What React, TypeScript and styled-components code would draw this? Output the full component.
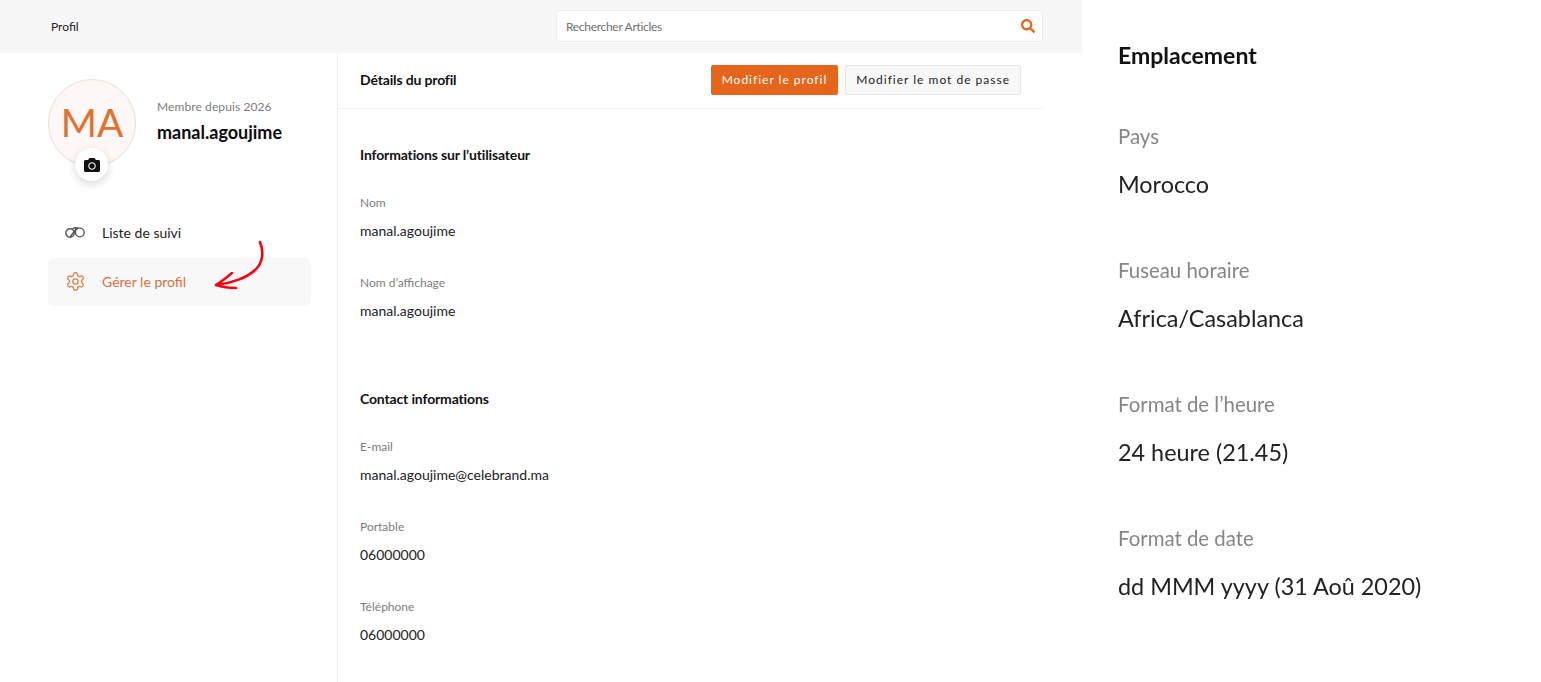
import React from "react";
import styled, { createGlobalStyle } from "styled-components";
import { FaCamera, FaSearch } from "react-icons/fa";
import { LuSettings } from "react-icons/lu";

const GlobalStyle = createGlobalStyle`
  html, body {
    margin: 0;
    padding: 0;
    height: 682px;
    overflow: hidden;
    background: #fff;
    font-family: Lato, "Open Sans", sans-serif;
  }
`;

const sections = [
  {
    title: "Informations sur l’utilisateur",
    fields: [
      { label: "Nom", value: "manal.agoujime" },
      { label: "Nom d’affichage", value: "manal.agoujime" },
    ],
  },
  {
    title: "Contact informations",
    fields: [
      { label: "E-mail", value: "manal.agoujime@celebrand.ma" },
      { label: "Portable", value: "06000000" },
      { label: "Téléphone", value: "06000000" },
    ],
  },
];

const locationFields = [
  { label: "Pays", value: "Morocco" },
  { label: "Fuseau horaire", value: "Africa/Casablanca" },
  { label: "Format de l’heure", value: "24 heure (21.45)" },
  { label: "Format de date", value: "dd MMM yyyy (31 Aoû 2020)" },
];

function Binoculars() {
  return (
    <svg width="20" height="12" viewBox="0 0 20 12" fill="none" stroke="#555" strokeWidth="1.4" strokeLinecap="round">
      <circle cx="5" cy="7" r="4.2" />
      <circle cx="14.8" cy="6.5" r="4.4" />
      <path d="M5.5 10.5 L11.5 2.5 M8 2.6 C9.5 1.6 11.5 1.6 13 2.2" />
    </svg>
  );
}

function HandArrow() {
  return (
    <svg width="54" height="54" viewBox="0 0 54 54" fill="none" stroke="#f5000c" strokeLinecap="round" strokeLinejoin="round">
      <path d="M47 2 C51 12 50 23 42 30 C35 37 20 43 3 45" strokeWidth="2.6" />
      <path d="M19 33 C13 38 8 42 3 45 C9 47 16 48 23 48" strokeWidth="2.4" />
    </svg>
  );
}

export default function App() {
  return (
    <Page>
      <GlobalStyle />
      <Left>
        <TopBar>
          <Crumb>Profil</Crumb>
          <SearchBox>
            <SearchText>Rechercher Articles</SearchText>
            <FaSearch size={14} color="#e5651a" />
          </SearchBox>
        </TopBar>
        <Body>
          <Sidebar>
            <ProfileRow>
              <Avatar>
                MA
                <CameraBadge>
                  <FaCamera size={16} color="#111" />
                </CameraBadge>
              </Avatar>
              <ProfileText>
                <Since>Membre depuis 2026</Since>
                <UserName>manal.agoujime</UserName>
              </ProfileText>
            </ProfileRow>
            <Menu>
              <MenuItem>
                <IconSlot>
                  <Binoculars />
                </IconSlot>
                Liste de suivi
              </MenuItem>
              <MenuItem $active>
                <IconSlot>
                  <LuSettings size={21} color="#d9834f" strokeWidth={1.5} />
                </IconSlot>
                Gérer le profil
                <ArrowMark>
                  <HandArrow />
                </ArrowMark>
              </MenuItem>
            </Menu>
          </Sidebar>
          <Main>
            <DetailsBar>
              <DetailsTitle>Détails du profil</DetailsTitle>
              <Actions>
                <ActionButton $primary>Modifier le profil</ActionButton>
                <ActionButton>Modifier le mot de passe</ActionButton>
              </Actions>
            </DetailsBar>
            <Content>
              {sections.map((section) => (
                <Section key={section.title}>
                  <SectionTitle>{section.title}</SectionTitle>
                  {section.fields.map((field) => (
                    <Field key={field.label}>
                      <FieldLabel>{field.label}</FieldLabel>
                      <FieldValue>{field.value}</FieldValue>
                    </Field>
                  ))}
                </Section>
              ))}
            </Content>
          </Main>
        </Body>
      </Left>
      <Right>
        <RightTitle>Emplacement</RightTitle>
        {locationFields.map((field) => (
          <RightField key={field.label}>
            <RightLabel>{field.label}</RightLabel>
            <RightValue>{field.value}</RightValue>
          </RightField>
        ))}
      </Right>
    </Page>
  );
}

const Page = styled.div`
  display: flex;
  width: 1541px;
  height: 682px;
  overflow: hidden;
`;

const Left = styled.div`
  width: 1082px;
  flex-shrink: 0;
  display: flex;
  flex-direction: column;
`;

const TopBar = styled.header`
  height: 53px;
  box-sizing: border-box;
  background: #f7f7f7;
  display: flex;
  align-items: center;
  justify-content: space-between;
  padding: 0 39px 1px 51px;
`;

const Crumb = styled.span`
  font-size: 12px;
  color: #222;
`;

const SearchBox = styled.div`
  width: 487px;
  height: 32px;
  box-sizing: border-box;
  background: #fff;
  border: 1px solid #ececec;
  border-radius: 3px;
  display: flex;
  align-items: center;
  justify-content: space-between;
  padding: 0 7px 0 9px;
`;

const SearchText = styled.span`
  font-size: 12px;
  letter-spacing: -0.3px;
  color: #6f6f6f;
`;

const Body = styled.div`
  flex: 1;
  display: flex;
`;

const Sidebar = styled.aside`
  width: 338px;
  box-sizing: border-box;
  border-right: 1px solid #efefef;
  padding: 26px 26px 0 48px;
`;

const ProfileRow = styled.div`
  display: flex;
  align-items: flex-start;
  gap: 21px;
`;

const Avatar = styled.div`
  position: relative;
  width: 88px;
  height: 88px;
  box-sizing: border-box;
  flex-shrink: 0;
  padding-bottom: 2px;
  border-radius: 50%;
  border: 1px solid #eddccf;
  background: #fdf8f5;
  color: #e2702e;
  font-size: 39px;
  display: flex;
  align-items: center;
  justify-content: center;
`;

const CameraBadge = styled.div`
  position: absolute;
  left: 26px;
  bottom: -15px;
  width: 33px;
  height: 33px;
  border-radius: 50%;
  background: #fff;
  box-shadow: 0 3px 9px rgba(0, 0, 0, 0.16);
  display: flex;
  align-items: center;
  justify-content: center;
`;

const ProfileText = styled.div`
  padding-top: 19px;
`;

const Since = styled.div`
  font-size: 12px;
  line-height: 17px;
  letter-spacing: 0.1px;
  color: #7c7c7c;
`;

const UserName = styled.div`
  margin-top: 6px;
  font-size: 18px;
  line-height: 22px;
  font-weight: 700;
  color: #0b0b0b;
`;

const Menu = styled.nav`
  margin-top: 41px;
  display: flex;
  flex-direction: column;
  gap: 2px;
`;

const MenuItem = styled.div<{ $active?: boolean }>`
  position: relative;
  height: 48px;
  box-sizing: border-box;
  display: flex;
  align-items: center;
  padding-left: 17px;
  padding-bottom: ${(p) => (p.$active ? "2px" : "0")};
  border-radius: 6px;
  font-size: 14px;
  background: ${(p) => (p.$active ? "#f8f8f8" : "transparent")};
  color: ${(p) => (p.$active ? "#d9703a" : "#222")};
`;

const IconSlot = styled.span`
  width: 37px;
  display: flex;
  align-items: center;
`;

const ArrowMark = styled.span`
  position: absolute;
  left: 165px;
  top: -18px;
  display: flex;
`;

const Main = styled.main`
  width: 705px;
`;

const DetailsBar = styled.div`
  height: 56px;
  box-sizing: border-box;
  border-bottom: 1px solid #f0f0f0;
  display: flex;
  align-items: center;
  justify-content: space-between;
  padding: 0 22px 2px;
`;

const DetailsTitle = styled.h2`
  margin: 0;
  font-size: 14px;
  font-weight: 700;
  letter-spacing: -0.15px;
  color: #111;
`;

const Actions = styled.div`
  display: flex;
  gap: 7px;
`;

const ActionButton = styled.button<{ $primary?: boolean }>`
  height: 30px;
  padding: 0 10px;
  border-radius: 2px;
  font-family: inherit;
  font-size: 12px;
  letter-spacing: 1px;
  border: 1px solid ${(p) => (p.$primary ? "#e5651a" : "#e6e6e6")};
  background: ${(p) => (p.$primary ? "#e5651a" : "#f8f8f8")};
  color: ${(p) => (p.$primary ? "#fff" : "#222")};
`;

const Content = styled.div`
  padding: 37px 22px 0;
  display: flex;
  flex-direction: column;
  gap: 48px;
`;

const Section = styled.section`
  display: flex;
  flex-direction: column;
`;

const SectionTitle = styled.h3`
  margin: 0 0 18px;
  font-size: 14px;
  line-height: 18px;
  font-weight: 700;
  letter-spacing: -0.15px;
  color: #111;
`;

const Field = styled.div`
  padding: 13px 0 23px;
`;

const FieldLabel = styled.div`
  font-size: 12px;
  line-height: 16px;
  color: #7c7c7c;
`;

const FieldValue = styled.div`
  margin-top: 11px;
  font-size: 14px;
  line-height: 17px;
  color: #222;
`;

const Right = styled.div`
  padding: 40px 0 0 36px;
  filter: blur(0.3px);
`;

const RightTitle = styled.h2`
  margin: 0 0 53px;
  font-size: 23px;
  line-height: 30px;
  font-weight: 700;
  color: #111;
`;

const RightField = styled.div`
  margin-bottom: 59px;
`;

const RightLabel = styled.div`
  font-size: 20.4px;
  line-height: 26px;
  color: #858585;
`;

const RightValue = styled.div`
  margin-top: 21px;
  font-size: 23.4px;
  line-height: 28px;
  color: #222;
`;
